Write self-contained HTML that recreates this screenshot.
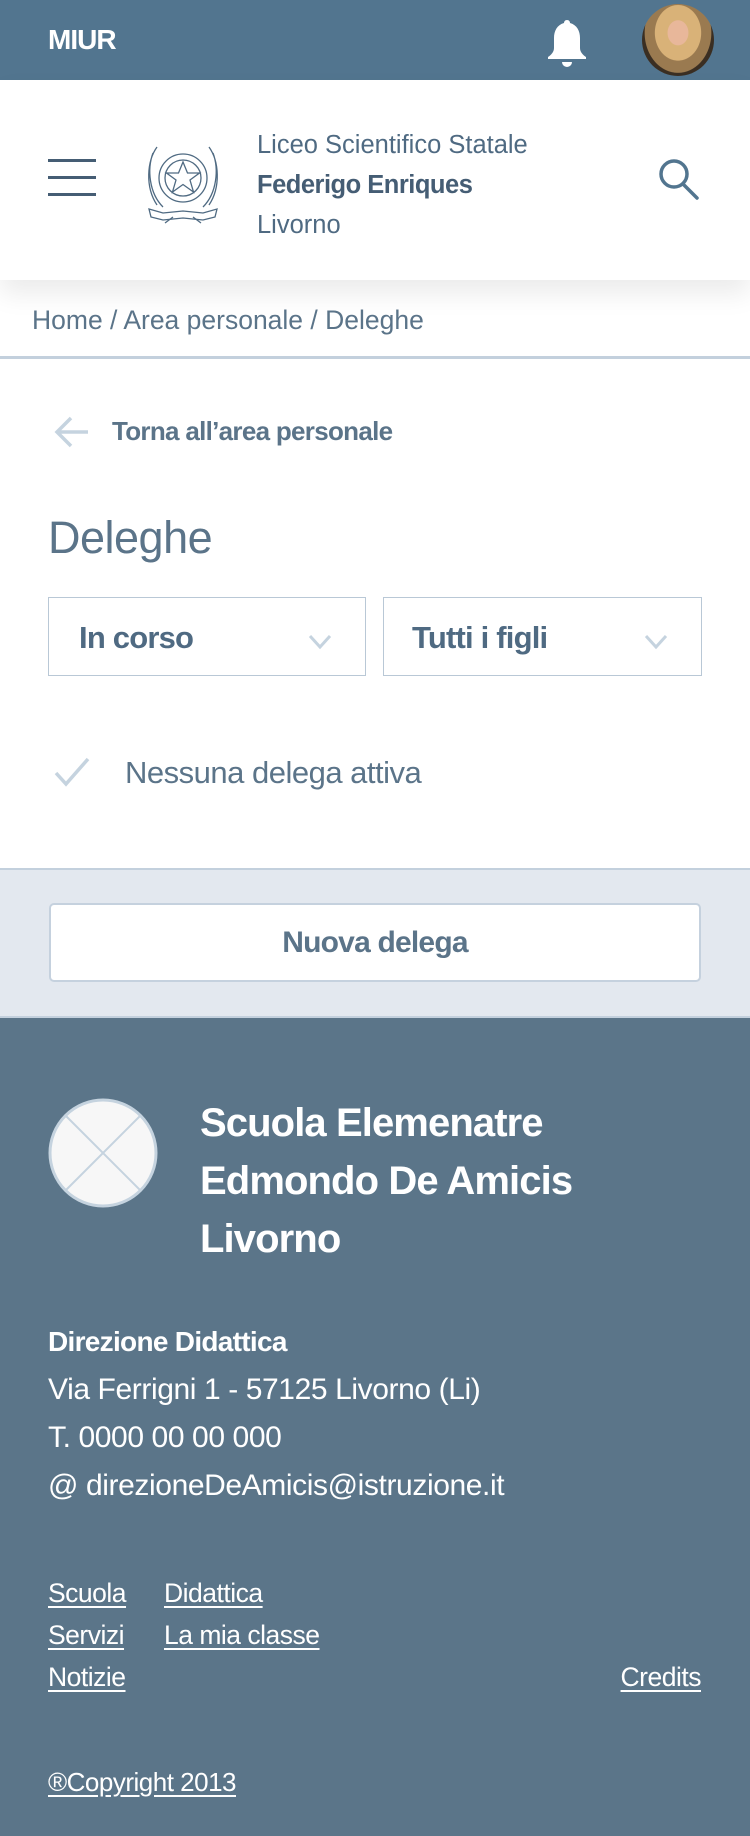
<!DOCTYPE html>
<html><head><meta charset="utf-8"><style>
*{margin:0;padding:0;box-sizing:border-box}
body{width:750px;height:1836px;overflow:hidden;font-family:"Liberation Sans",sans-serif;background:#fff;color:#4f6a82;position:relative}
.a{position:absolute;white-space:nowrap}
.top{position:absolute;left:0;top:0;width:750px;height:80px;background:#52758f}
.hdr{position:absolute;left:0;top:80px;width:750px;height:200px;background:#fff;box-shadow:0 14px 24px rgba(0,0,0,.08)}
.foot{position:absolute;left:0;top:1018px;width:750px;height:818px;background:#5b7589;color:#fff}
.foot a{color:#fff;text-decoration:underline;text-underline-offset:4px}
.sel{position:absolute;top:597px;height:79px;border:1.5px solid #b9c8d6;background:#fff}
</style></head><body>
<div class="top">
  <div class="a" style="left:48px;top:24px;color:#fff;font-weight:bold;font-size:28px;letter-spacing:-1px">MIUR</div>
  <svg class="a" style="left:543px;top:18px" width="48" height="50" viewBox="0 0 48 50"><path d="M24 2c2 0 3 1.5 3 3 7 2 10 8 10 15v10c0 4 3 7 6 9v2H5v-2c3-2 6-5 6-9V20c0-7 3-13 10-15 0-1.5 1-3 3-3z" fill="#fff"/><path d="M19 44a5 5 0 0 0 10 0z" fill="#fff"/></svg>
  <div class="a" style="left:642px;top:4px;width:72px;height:72px;border-radius:50%;background:radial-gradient(ellipse at 50% 40%,#e8b79a 0 20%,#d9b278 21% 45%,#9a7a50 46% 65%,#3a2e22 66%)"></div>
</div>
<div class="hdr">
  <div class="a" style="left:48px;top:79px;width:48px;height:3px;background:#455d74"></div>
  <div class="a" style="left:48px;top:96px;width:48px;height:3px;background:#455d74"></div>
  <div class="a" style="left:48px;top:113px;width:48px;height:3px;background:#455d74"></div>
  <svg class="a" style="left:143px;top:53px" width="80" height="92" viewBox="0 0 80 92" fill="none" stroke="#4f6a82" stroke-width="1.3">
    <path d="M14 14c-10 14-12 40 0 58M10 20c-6 16-4 40 10 54M66 14c10 14 12 40 0 58M70 20c6 16 4 40-10 54"/>
    <circle cx="40" cy="45" r="24"/><circle cx="40" cy="45" r="18"/>
    <path d="M40 29l4.5 11h12l-9.5 7 3.5 12-10.5-7.5-10.5 7.5 3.5-12-9.5-7h12z"/>
    <path d="M6 76l14 4 20-2 20 2 14-4-2 8-12 3-20-2-20 2-12-3z"/>
    <path d="M30 84l-8 6M50 84l8 6"/>
  </svg>
  <div class="a" style="left:257px;top:45px;font-size:25.5px;color:#4f6a82;line-height:40px">Liceo Scientifico Statale</div>
  <div class="a" style="left:257px;top:85px;font-size:25.5px;font-weight:bold;color:#455d74;line-height:40px;letter-spacing:-.5px">Federigo Enriques</div>
  <div class="a" style="left:257px;top:125px;font-size:25.5px;color:#4f6a82;line-height:40px">Livorno</div>
  <svg class="a" style="left:658px;top:78px" width="44" height="44" viewBox="0 0 44 44" fill="none" stroke="#52758f" stroke-width="3.5"><circle cx="16" cy="16" r="13"/><path d="M25 26l14 14" stroke-linecap="round"/></svg>
</div>
<div class="a" style="left:32px;top:305px;font-size:26.5px;color:#5b7489">Home / Area personale / Deleghe</div>
<div class="a" style="left:0;top:356px;width:750px;height:3px;background:#c3d0dd"></div>
<svg class="a" style="left:54px;top:415px" width="36" height="34" viewBox="0 0 36 34" fill="none" stroke="#c5d3df" stroke-width="3.5"><path d="M34 17H4M17 3L3 17l14 14"/></svg>
<div class="a" style="left:112px;top:416px;font-size:26px;font-weight:bold;color:#5b7489;letter-spacing:-.7px">Torna all’area personale</div>
<div class="a" style="left:48px;top:512px;font-size:45px;color:#5b7489;letter-spacing:-.5px">Deleghe</div>
<div class="sel" style="left:48px;width:318px"></div>
<div class="sel" style="left:383px;width:319px"></div>
<div class="a" style="left:79px;top:620px;font-size:31px;font-weight:bold;color:#4f6a82;letter-spacing:-.8px">In corso</div>
<div class="a" style="left:412px;top:620px;font-size:31px;font-weight:bold;color:#4f6a82;letter-spacing:-.8px">Tutti i figli</div>
<svg class="a" style="left:308px;top:634px" width="24" height="16" viewBox="0 0 24 16" fill="none" stroke="#c5d3df" stroke-width="3"><path d="M2 2l10 11L22 2"/></svg>
<svg class="a" style="left:644px;top:634px" width="24" height="16" viewBox="0 0 24 16" fill="none" stroke="#c5d3df" stroke-width="3"><path d="M2 2l10 11L22 2"/></svg>
<svg class="a" style="left:54px;top:757px" width="36" height="30" viewBox="0 0 36 30" fill="none" stroke="#c5d3df" stroke-width="3.5"><path d="M2 16l10 11L34 2"/></svg>
<div class="a" style="left:125px;top:755px;font-size:31px;color:#5b7489;letter-spacing:-.5px">Nessuna delega attiva</div>
<div class="a" style="left:0;top:868px;width:750px;height:150px;background:#e3e8ef;border-top:2px solid #c3d0dd;border-bottom:2px solid #c3d0dd"></div>
<div class="a" style="left:49px;top:903px;width:652px;height:79px;background:#fff;border:2px solid #c5d1de;border-radius:5px;text-align:center;line-height:75px;font-size:30px;font-weight:bold;color:#5b7489;letter-spacing:-.8px">Nuova delega</div>
<div class="foot">
  <svg class="a" style="left:48px;top:80px" width="110" height="110" viewBox="0 0 110 110"><circle cx="55" cy="55" r="53" fill="#f7f7f7" stroke="#c5d3df" stroke-width="3"/><path d="M18 18L92 92M92 18L18 92" stroke="#c5d3df" stroke-width="2"/></svg>
  <div class="a" style="left:200px;top:76px;font-size:40px;font-weight:bold;line-height:58px;letter-spacing:-.9px">Scuola Elemenatre<br>Edmondo De Amicis<br>Livorno</div>
  <div class="a" style="left:48px;top:300px;font-size:28px;font-weight:bold;letter-spacing:-.7px;line-height:48px">Direzione Didattica</div>
  <div class="a" style="left:48px;top:348px;font-size:30px;line-height:48px;letter-spacing:-.4px">Via Ferrigni 1 - 57125 Livorno (Li)<br>T. 0000 00 00 000<br>@ direzioneDeAmicis@istruzione.it</div>
  <div class="a" style="left:48px;top:554px;font-size:26.5px;line-height:42px;letter-spacing:-.5px"><a>Scuola</a><br><a>Servizi</a><br><a>Notizie</a></div>
  <div class="a" style="left:164px;top:554px;font-size:26.5px;line-height:42px;letter-spacing:-.5px"><a>Didattica</a><br><a>La mia classe</a></div>
  <div class="a" style="right:49px;top:638px;font-size:26.5px;line-height:42px;letter-spacing:-.5px"><a>Credits</a></div>
  <div class="a" style="left:48px;top:743px;font-size:26px;line-height:42px;letter-spacing:-.5px"><a>®Copyright 2013</a></div>
</div>
</body></html>
